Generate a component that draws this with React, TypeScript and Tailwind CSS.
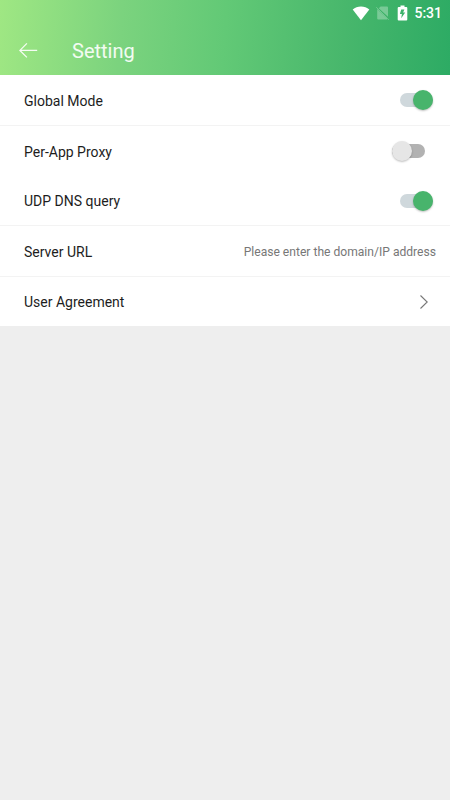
import { useState } from 'react'
import type { ReactNode } from 'react'

function StatusBar() {
  return (
    <div className="flex h-[25px] items-center justify-end pr-[8px] pt-px">
      <svg className="mr-[6px]" width="18" height="16" viewBox="0 0 18 16" fill="#fff">
        <path d="M9 15.200.7 4.400C3 2.300 5.800 1.400 9 1.400s6 .9 8.300 3z" />
      </svg>
      {/* No SIM */}
      <svg className="mr-[8px]" width="13" height="16" viewBox="0 0 13 16">
        <path d="M4.600 1.500H11q1 0 1 1V11.800L2.800 3.200zM1.200 4.100 11 13.600V14.500H2.200q-1 0-1-1z" fill="#fff" fillOpacity="0.3" />
        <path d="M.3 2.200 12.700 14.900" stroke="#fff" strokeOpacity="0.35" strokeWidth="0.800" />
      </svg>
      <svg className="mr-[6px]" width="11" height="16" viewBox="0 0 11 16">
        <path
          d="M3.500.5h4V2h1.800q1 0 1 1v11.500q0 1-1 1H1.700q-1 0-1-1V3q0-1 1-1h1.800z"
          fill="#fff"
        />
        <path d="M7.400 4.400H4.200L2.900 9h2L4.200 13.200 8.200 7.500H6.100z" fill="#3eb36c" />
      </svg>
      <span className="text-[14px] font-medium leading-none text-white">5:31</span>
    </div>
  )
}

function Header() {
  return (
    <header className="h-[75px] bg-[linear-gradient(94deg,#9fe783_0%,#7bd37e_27%,#62c976_50%,#48b76c_76%,#2dab64_100%)]">
      <StatusBar />
      <div className="flex h-[50px] items-center pl-[19px]">
        <button type="button" aria-label="Back" className="mr-[34px]">
          <svg width="19" height="16" viewBox="0 0 19 16" fill="none" stroke="#fff" strokeOpacity="0.9" strokeWidth="1.300">
            <path d="M18.200 8.400H1M7.900 1.400.9 8.400l7 7" />
          </svg>
        </button>
        <h1 className="pt-[2px] text-[20px] leading-6 text-white/90">Setting</h1>
      </div>
    </header>
  )
}

function Toggle({ label, initial }: { label: string; initial: boolean }) {
  const [on, setOn] = useState(initial)

  return (
    <button
      type="button"
      role="switch"
      aria-label={label}
      aria-checked={on}
      onClick={() => setOn(!on)}
      className={`flex h-5 w-[41px] items-center ${on ? 'justify-end' : 'justify-start'}`}
    >
      <span
        className={`flex h-[14px] w-[33px] items-center rounded-full ${
          on ? 'justify-end bg-[#cfd8dc]' : 'justify-start bg-[#b2b2b2]'
        }`}
      >
        <span
          className={`size-5 shrink-0 rounded-full shadow-[0_1px_2px_rgba(0,0,0,0.25)] ${
            on ? 'bg-[#48b46c]' : 'bg-[#e6e6e6]'
          }`}
        />
      </span>
    </button>
  )
}

function Row({ label, className, children }: { label: string; className: string; children: ReactNode }) {
  return (
    <div className={`flex items-center justify-between border-[#f3f3f3] bg-white pl-6 ${className}`}>
      <span className="pt-px text-[14px] leading-5 text-[#1d1d1d]">{label}</span>
      {children}
    </div>
  )
}

export default function App() {
  return (
    <div className="min-h-screen bg-[#eeeeee] font-['Roboto',sans-serif]">
      <Header />
      <main>
        <Row label="Global Mode" className="h-[51px] border-b pr-[17px]">
          <Toggle label="Global Mode" initial={true} />
        </Row>
        <Row label="Per-App Proxy" className="h-[50px] pr-[17px]">
          <Toggle label="Per-App Proxy" initial={false} />
        </Row>
        <Row label="UDP DNS query" className="h-[50px] border-b pr-[17px]">
          <Toggle label="UDP DNS query" initial={true} />
        </Row>
        <Row label="Server URL" className="h-[51px] border-b pr-[14px]">
          <span className="pt-px text-[12.100px] leading-5 text-[#777777]">Please enter the domain/IP address</span>
        </Row>
        <Row label="User Agreement" className="h-[49px] pr-[21px]">
          <svg width="10" height="16" viewBox="0 0 10 16" fill="none" stroke="#777" strokeWidth="1.100">
            <path d="m1.500 1.500 6.700 6.500-6.700 6.500" />
          </svg>
        </Row>
      </main>
    </div>
  )
}
